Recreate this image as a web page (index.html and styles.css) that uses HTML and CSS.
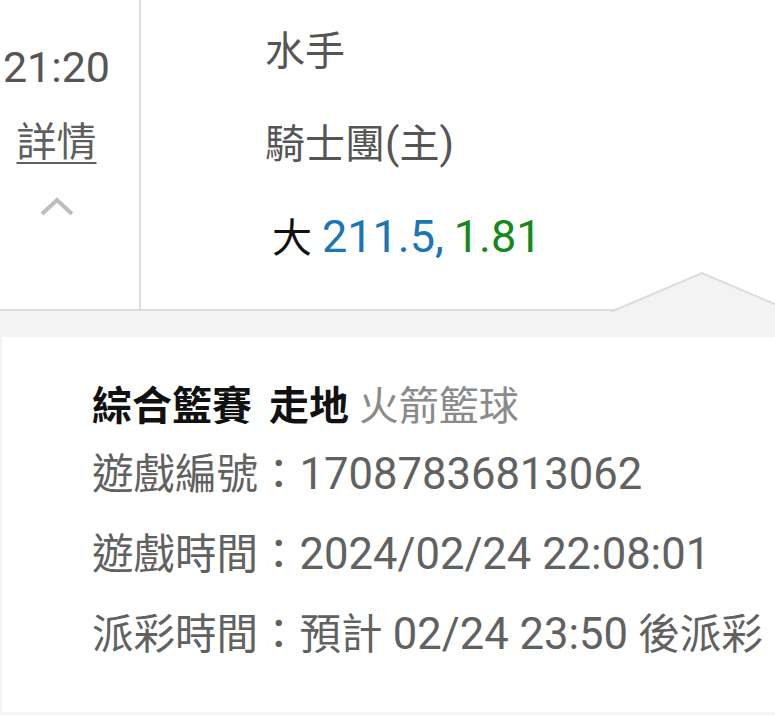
FILE: index.html
```html
<!DOCTYPE html>
<html lang="zh-Hant">

<head>
    <meta charset="UTF-8">
    <meta name="viewport" content="width=device-width, initial-scale=1.0">
    <title>投注記錄</title>
    <link rel="stylesheet" href="styles.css">
</head>

<body>
    <div class="match">
        <div class="time-col">
            <div class="kickoff">21:20</div>
            <a class="detail-link" href="#">詳情</a>
            <svg class="chevron" width="36" height="22" viewBox="0 0 36 22">
                <polyline points="3,19 18,5 33,19" fill="none" stroke="#bdbdbd" stroke-width="4" />
            </svg>
        </div>
        <div class="bet-col">
            <div class="bet-line">水手</div>
            <div class="bet-line">騎士團<span class="num">(</span>主<span class="num">)</span></div>
            <div class="bet-line odds">大 <span class="line-val">211.5,</span> <span class="price">1.81</span></div>
        </div>
        <!-- arrow pointing up at the open bet -->
        <svg class="notch" width="182" height="44" viewBox="0 0 182 44">
            <polygon points="2,41 91,3 180,41 180,44 2,44" fill="#f3f3f3" />
            <polyline points="0,41 2,41 91,3 180,41" fill="none" stroke="#dcdcdc" stroke-width="2" />
        </svg>
    </div>

    <div class="detail-wrap">
        <div class="detail-panel">
            <div class="detail-title"><b>綜合籃賽 走地</b> <span class="team">火箭籃球</span></div>
            <div class="detail-row">遊戲編號：<span class="num">17087836813062</span></div>
            <div class="detail-row">遊戲時間：<span class="num">2024/02/24 22:08:01</span></div>
            <div class="detail-row">派彩時間：預計 <span class="num">02/24 23:50</span> 後派彩</div>
        </div>
    </div>
</body>

</html>
```

FILE: styles.css
```css
* {
    margin: 0;
    padding: 0;
    box-sizing: border-box;
}

body {
    font-family: Roboto, "Noto Sans CJK TC", sans-serif;
    background-color: #ffffff;
    color: #555;
    width: 775px;
    overflow: hidden;
}

.num {
    font-size: 1.05em;
}

.match {
    position: relative;
    display: flex;
    height: 311px;
    border-bottom: 2px solid #dcdcdc;
    background-color: #ffffff;
}

.time-col {
    width: 141px;
    padding: 37px 26px 0 0;
    border-right: 2px solid #dcdcdc;
    display: flex;
    flex-direction: column;
    align-items: center;
}

.kickoff {
    font-size: 43px;
    line-height: 60px;
    color: #555;
}

.detail-link {
    margin-top: 16px;
    font-size: 40px;
    line-height: 60px;
    color: #5f5f5f;
    text-decoration: underline;
    text-decoration-thickness: 2px;
    text-underline-offset: 6px;
}

.chevron {
    margin-top: 22px;
}

.bet-col {
    padding: 6px 0 0 124px;
}

.bet-line {
    font-size: 40px;
    line-height: 92px;
    color: #555;
    white-space: nowrap;
}

.odds {
    padding-left: 7px;
    color: #111;
}

.line-val,
.price {
    font-size: 45px;
}

.line-val {
    color: #1a76b4;
}

.price {
    color: #16891c;
}

.notch {
    position: absolute;
    left: 611px;
    top: 270px;
}

.detail-wrap {
    background-color: #f3f3f3;
    padding: 26px 0 3px 2px;
}

.detail-panel {
    background-color: #ffffff;
    padding: 42px 0 37px 90px;
}

.detail-title {
    font-size: 40px;
    line-height: 56px;
    color: #111;
    white-space: nowrap;
}

.detail-title b {
    font-weight: 700;
    word-spacing: 7px;
}

.team {
    color: #8a8a8a;
}

.detail-row {
    font-size: 41.5px;
    line-height: 80px;
    color: #616161;
    white-space: nowrap;
}
```
